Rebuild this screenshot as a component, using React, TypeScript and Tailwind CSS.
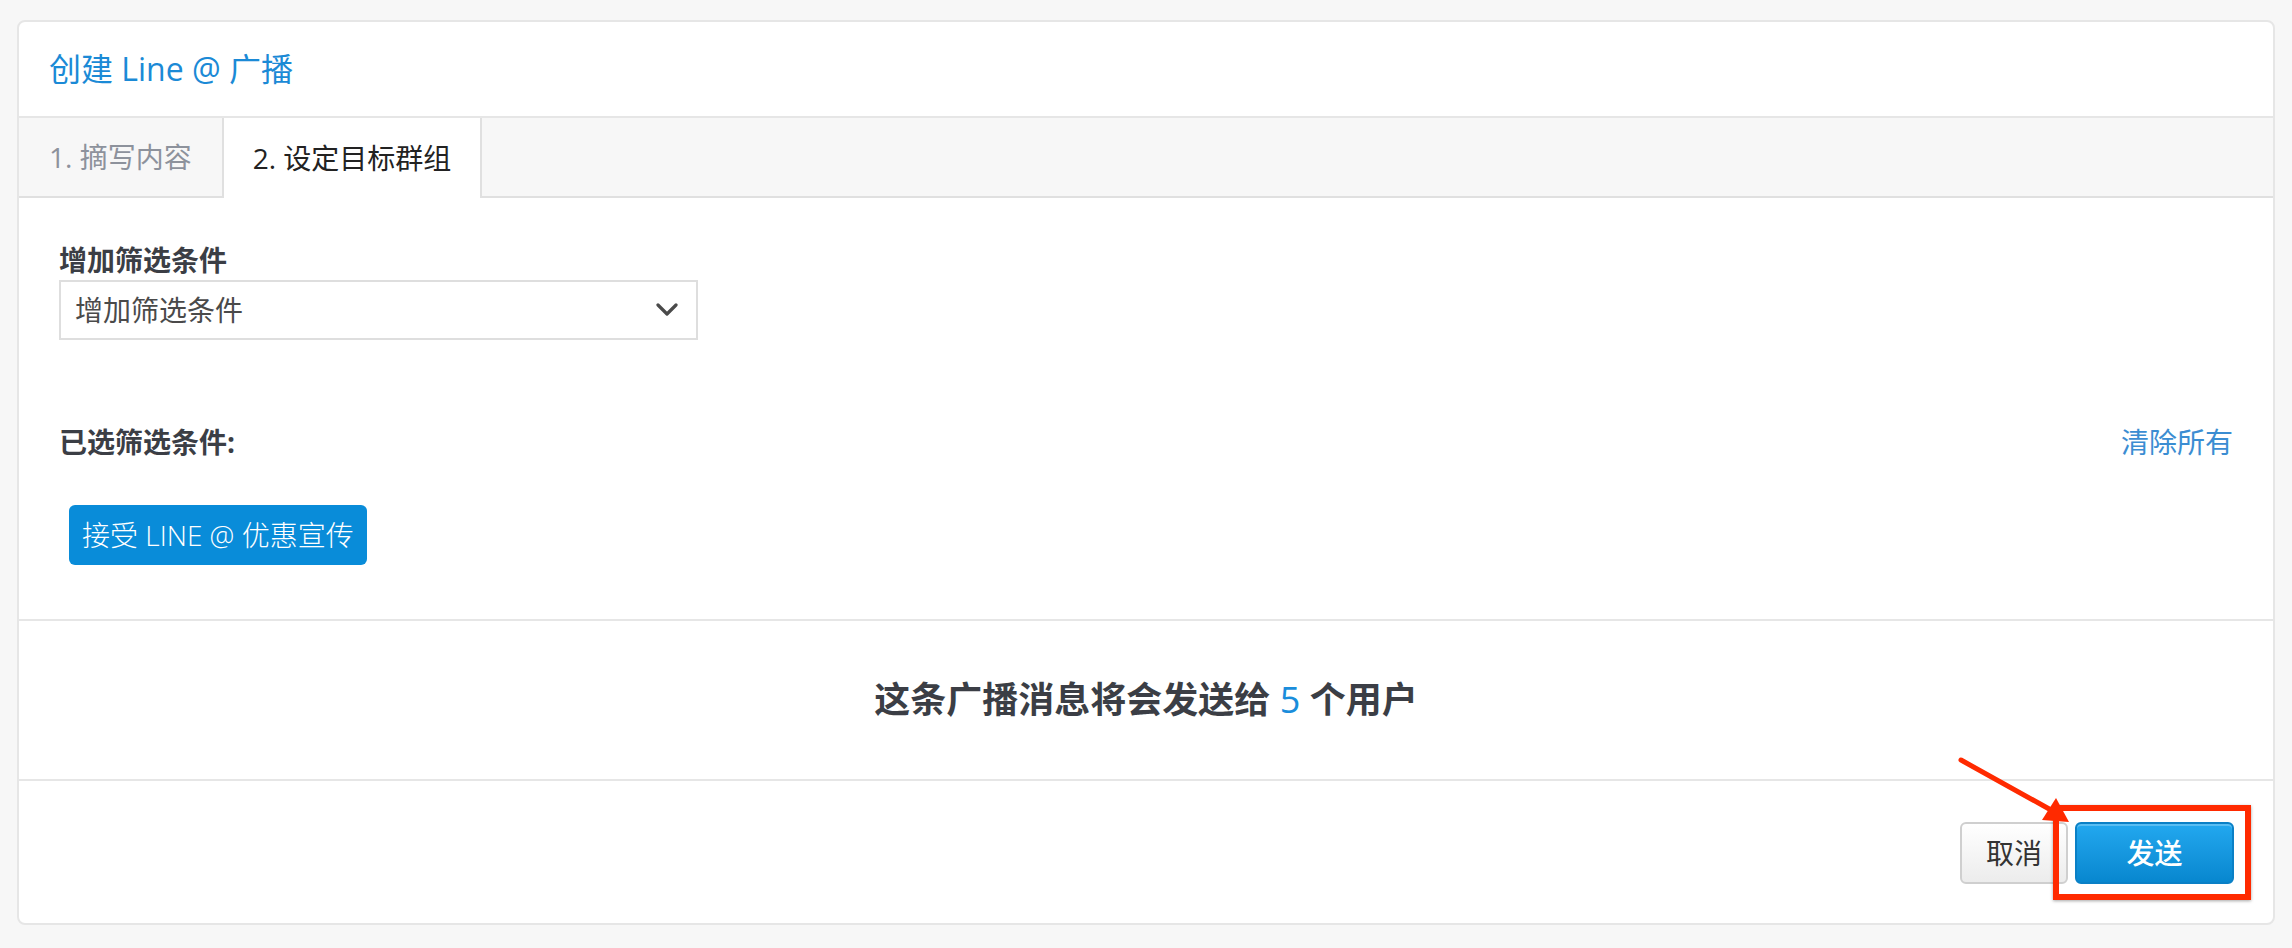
import * as React from "react";

const font = "font-['Open_Sans','Noto_Sans_CJK_SC',sans-serif]";

function Chevron() {
  return (
    <svg width="22" height="14" viewBox="0 0 22 14" fill="none">
      <path d="M2 2 L11 11 L20 2" stroke="#4a4a4a" strokeWidth="3.2" strokeLinecap="round" strokeLinejoin="round" />
    </svg>
  );
}

// red call-out drawn on top of the send button
function Callout() {
  return (
    <>
      <span className="pointer-events-none absolute left-[-22px] top-[-17px] h-[95px] w-[198px] border-[6px] border-[#ff2a00] shadow-[0_1px_3px_rgba(0,0,0,0.35)]" />
      <svg
        className="pointer-events-none absolute left-[-120px] top-[-70px] overflow-visible"
        width="120"
        height="76"
        viewBox="0 0 120 76"
      >
        <line x1="6" y1="8" x2="96" y2="58" stroke="#ff2a00" strokeWidth="5" strokeLinecap="round" />
        <polygon points="114,70 87,68 101,46" fill="#ff2a00" />
      </svg>
    </>
  );
}

export default function App() {
  const [tab, setTab] = React.useState<1 | 2>(2);

  return (
    <div className={`min-h-[948px] bg-[#f7f7f7] px-[17px] pt-[20px] pb-[23px] ${font}`}>
      <div className="rounded-[8px] border-2 border-[#e6e6e6] bg-white">
        {/* header */}
        <div className="flex h-[96px] items-center border-b-2 border-[#e6e6e6] px-[30px]">
          <h1 className="text-[32px] leading-none font-normal text-[#1b8ad6]">创建 Line @ 广播</h1>
        </div>

        {/* step tabs */}
        <div className="flex h-[80px] border-b-2 border-[#e0e0e0] bg-[#f7f7f7]">
          <button
            type="button"
            onClick={() => setTab(1)}
            className={
              "px-[30px] text-[28px] " +
              (tab === 1
                ? "mb-[-2px] border-r-2 border-[#e0e0e0] bg-white text-[#222]"
                : "border-r-2 border-[#e0e0e0] text-[#8d929c]")
            }
          >
            1. 摘写内容
          </button>
          <button
            type="button"
            onClick={() => setTab(2)}
            className={
              "px-[29px] text-[28px] " +
              (tab === 2
                ? "mb-[-2px] border-r-2 border-[#e0e0e0] bg-white text-[#222]"
                : "border-r-2 border-[#e0e0e0] text-[#8d929c]")
            }
          >
            2. 设定目标群组
          </button>
        </div>

        {/* filters */}
        <div className="px-[40px] pt-[42px] pb-[54px]">
          <div className="text-[28px] leading-[40px] font-bold text-[#3b3e45]">增加筛选条件</div>
          <div className="flex h-[60px] w-[639px] items-center justify-between border-2 border-[#dedede] bg-white pr-[18px] pl-[14px]">
            <span className="text-[28px] text-[#4a4a4a]">增加筛选条件</span>
            <Chevron />
          </div>

          <div className="mt-[82px] flex h-[40px] items-center justify-between">
            <span className="text-[28px] font-bold text-[#3b3e45]">已选筛选条件:</span>
            <a href="#" className="text-[28px] text-[#3b8dd2]">清除所有</a>
          </div>

          <div className="mt-[43px] ml-[10px]">
            <span className="inline-flex h-[60px] items-center rounded-[6px] bg-[#098cd9] px-[13px] text-[28px] font-light text-white">
              接受 LINE @ 优惠宣传
            </span>
          </div>
        </div>

        {/* audience summary */}
        <div className="flex h-[160px] items-center justify-center border-t-2 border-[#e6e6e6]">
          <p className="text-[36px] font-semibold text-[#3b3e45]">
            这条广播消息将会发送给 <span className="font-normal text-[#1a8ddb]">5</span> 个用户
          </p>
        </div>

        {/* actions */}
        <div className="flex justify-end gap-[7px] border-t-2 border-[#e6e6e6] px-[39px] pt-[41px] pb-[39px]">
          <button
            type="button"
            className="h-[62px] w-[108px] rounded-[6px] border-2 border-[#cfcfcf] bg-gradient-to-b from-white to-[#ececec] text-[28px] text-[#333]"
          >
            取消
          </button>
          <span className="relative">
            <button
              type="button"
              className="h-[62px] w-[159px] rounded-[6px] border-2 border-[#0a80c6] bg-gradient-to-b from-[#22a8ef] to-[#0787cf] text-[28px] font-medium text-white shadow-[inset_0_2px_0_rgba(255,255,255,0.25)]"
            >
              发送
            </button>
            <Callout />
          </span>
        </div>
      </div>
    </div>
  );
}
